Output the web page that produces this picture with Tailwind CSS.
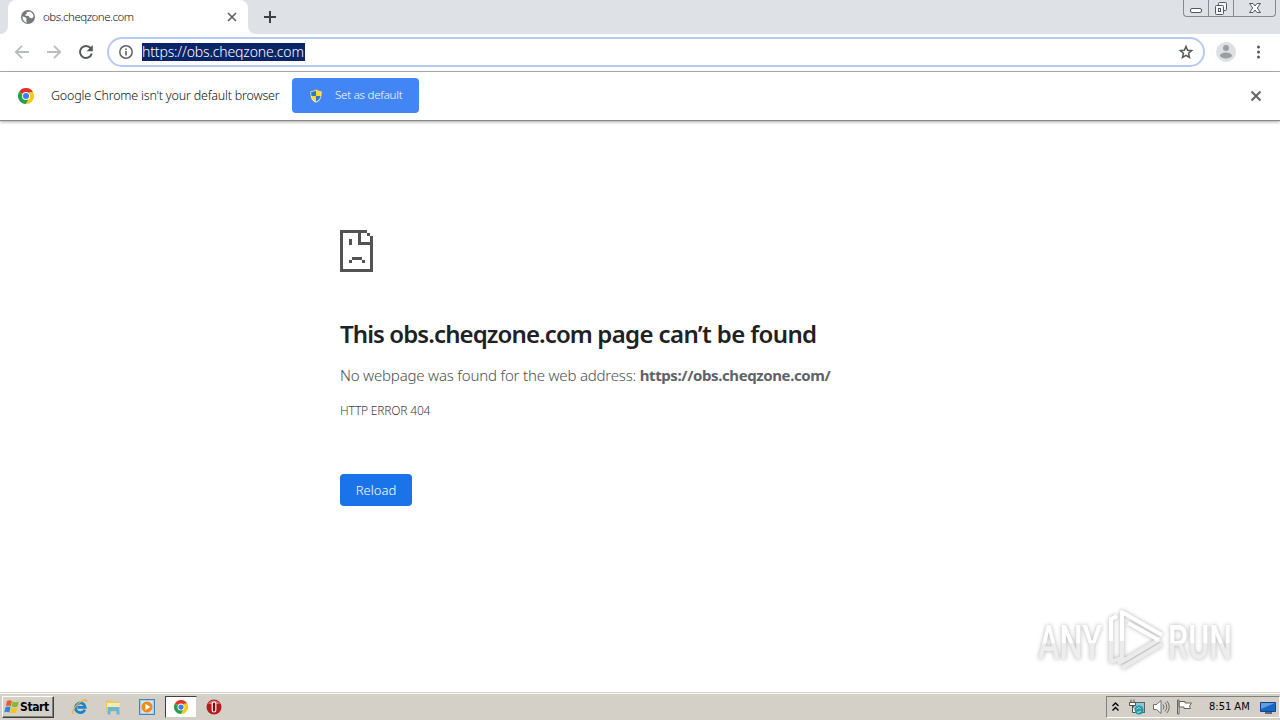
<!DOCTYPE html>
<html lang="en">
<head>
  <meta charset="UTF-8">
  <meta name="viewport" content="width=device-width, initial-scale=1.0">
  <title>obs.cheqzone.com</title>
  <script src="https://cdn.jsdelivr.net/npm/@tailwindcss/browser@4"></script>
</head>
<body class="bg-white w-[1280px] h-[720px] overflow-hidden flex flex-col font-['Noto_Sans',sans-serif]">

  <!-- Tab strip -->
  <div class="h-[34px] shrink-0 bg-[#dee1e6] flex justify-between">
    <div class="flex">
      <div class="w-2 bg-white"><div class="w-2 h-[34px] bg-[#dee1e6] rounded-br-lg"></div></div>
      <div class="w-[240px] bg-white rounded-t-lg flex items-center pl-[13px] pr-[10px]">
        <svg class="w-[14px] h-[14px]" viewBox="0 0 14 14">
          <circle cx="7" cy="7" r="7" fill="#77797d"/>
          <path d="M8.500 1.400 5.600 2.200l.3 1.600-1.700.7.3 1.300 3.100.3 1 1.700 2.300.4 1.600-1.200C12.500 4 11 2 8.500 1.400zM1.500 6.200l3.300 1.300 1 1.700-.7 1.300.8 2.200C3 12 1.300 9.500 1.500 6.200z" fill="#fff"/>
        </svg>
        <span class="ml-2 text-[11.5px] leading-4 tracking-[-0.47px] font-light text-[#101114] whitespace-nowrap grow">obs.cheqzone.com</span>
        <svg class="w-3 h-3" viewBox="0 0 12 12"><path d="M2 2l8 8M10 2l-8 8" stroke="#5f6368" stroke-width="1.700"/></svg>
      </div>
      <div class="w-2 bg-white"><div class="w-2 h-[34px] bg-[#dee1e6] rounded-bl-lg"></div></div>
      <svg class="w-3 h-3 ml-2 mt-[11px]" viewBox="0 0 12 12"><path d="M6 0v12M0 6h12" stroke="#3c4043" stroke-width="2"/></svg>
    </div>
    <!-- Window buttons -->
    <div class="w-[93px] h-[17px] mr-1 border border-t-0 border-[#858a95] rounded-b flex">
      <div class="w-[25px] border-r border-[#858a95] flex justify-center">
        <svg class="w-3 h-4" viewBox="0 0 12 16"><rect x=".5" y="8.500" width="11" height="4" rx="1.500" fill="#fff" stroke="#535666"/></svg>
      </div>
      <div class="w-[25px] border-r border-[#858a95] flex justify-center">
        <svg class="w-[14px] h-4" viewBox="0 0 14 16" fill="#f4f5f7" stroke="#535666">
          <rect x="4.500" y="2.500" width="8" height="8" rx="1"/>
          <rect x="1.500" y="5.500" width="8" height="9" rx="1"/>
          <rect x="4.500" y="8.500" width="2" height="3"/>
        </svg>
      </div>
      <div class="grow flex justify-center">
        <svg class="w-[14px] h-4" viewBox="0 0 14 16"><path d="M1.500 3.500h3.500l2 2.500 2-2.500h3.500L9.300 8l3.200 4.500H9L7 10l-2 2.500H1.500L4.700 8z" fill="#fff" stroke="#535666"/></svg>
      </div>
    </div>
  </div>

  <!-- Toolbar -->
  <div class="h-[38px] shrink-0 border-b border-[#b0b1b4] flex items-center pl-[14px] pr-3 pb-px">
    <svg class="w-4 h-4" viewBox="0 0 16 16" fill="none" stroke="#b9bbbe" stroke-width="1.800"><path d="M15 8H2.500M8 1.800 1.800 8 8 14.200"/></svg>
    <svg class="w-4 h-4 ml-4" viewBox="0 0 16 16" fill="none" stroke="#b9bbbe" stroke-width="1.800"><path d="M1 8h12.500M8 1.800 14.200 8 8 14.200"/></svg>
    <svg class="w-4 h-4 ml-4" viewBox="0 0 16 16"><path d="M12.700 4.200A6 6 0 1 0 13.800 9.500" fill="none" stroke="#54575b" stroke-width="2"/><path d="M14.800 1v6.200H8.600z" fill="#54575b"/></svg>
    <div class="w-[1098px] h-[30px] ml-[13px] border-2 border-[#b6cbf0] rounded-full flex items-center pl-[9px] pr-[9px]">
      <svg class="w-4 h-4" viewBox="0 0 16 16"><circle cx="8" cy="8" r="6.200" fill="none" stroke="#5f6368" stroke-width="1.500"/><path d="M8 7v4.500M8 4.400V6" stroke="#5f6368" stroke-width="1.600"/></svg>
      <span class="ml-2 w-[163px] h-[18px] bg-[#0a246a] text-white text-[14px] leading-[17px] tracking-[-0.15px] font-light whitespace-nowrap">https://obs.cheqzone.com</span>
      <svg class="w-4 h-4 ml-auto" viewBox="0 0 16 16"><path d="M8 2.500l1.600 3.700 4.100.4-3.100 2.700.9 4.100L8 11.300l-3.500 2.100.9-4.100-3.100-2.700 4.100-.4z" fill="none" stroke="#54575b" stroke-width="1.500"/></svg>
    </div>
    <svg class="w-5 h-5 ml-[11px]" viewBox="0 0 20 20"><circle cx="10" cy="10" r="10" fill="#dfe0e2"/><circle cx="10" cy="6" r="3" fill="#9b9ea2"/><ellipse cx="10" cy="13.500" rx="6" ry="3" fill="#9b9ea2"/></svg>
    <svg class="w-4 h-4 ml-auto" viewBox="0 0 16 16" fill="#54575b"><circle cx="6.500" cy="3" r="1.500"/><circle cx="6.500" cy="8" r="1.500"/><circle cx="6.500" cy="13" r="1.500"/></svg>
  </div>

  <!-- Default browser bar -->
  <div class="h-[49px] shrink-0 border-b border-[#85878a] shadow-[0_1px_3px_rgba(0,0,0,0.35)] flex items-center pl-[18px] pr-[18px] pb-px">
    <svg class="w-4 h-4" viewBox="0 0 48 48">
      <path d="M24 24 3.200 12A24 24 0 0 1 44.800 12z" fill="#e2332a"/>
      <path d="M24 24 3.200 12A24 24 0 0 0 24 48l10.400-18z" fill="#2a9f4b"/>
      <path d="M44.800 12A24 24 0 0 1 24 48l10.400-18L34 12z" fill="#fbc813"/>
      <circle cx="24" cy="24" r="12" fill="#fff"/><circle cx="24" cy="24" r="9" fill="#3c7de6"/>
    </svg>
    <span class="ml-[17px] w-[241px] text-[12.5px] leading-5 tracking-[-0.21px] font-light text-[#101114] whitespace-nowrap">Google Chrome isn't your default browser</span>
    <button class="w-[127px] h-[35px] bg-[#4285f4] rounded flex items-center pl-4">
      <svg class="w-4 h-4" viewBox="0 0 16 16">
        <path d="M8 1C6 2.500 4 3 2 3c0 6 1 10 6 12 5-2 6-6 6-12-2 0-4-.5-6-2z" fill="#e9edf2" stroke="#66727e" stroke-width=".6"/>
        <path d="M8 2.300C6.500 3.300 5 3.900 3.100 4L3.400 8H8z" fill="#2878cc"/><path d="M8 2.300c1.500 1 3 1.600 4.900 1.700l-.3 4H8z" fill="#ffd927"/>
        <path d="M3.400 8H8v5.700C5.200 12.400 4 10.500 3.400 8z" fill="#ffd927"/><path d="M12.600 8H8v5.700c2.800-1.300 4-3.200 4.600-5.700z" fill="#2878cc"/>
      </svg>
      <span class="ml-[11px] pb-px text-[11.5px] tracking-[-0.22px] font-light text-white whitespace-nowrap">Set as default</span>
    </button>
    <svg class="w-3 h-3 ml-auto" viewBox="0 0 12 12"><path d="M1.500 1.500l9 9M10.500 1.500l-9 9" stroke="#5f6368" stroke-width="2"/></svg>
  </div>

  <!-- Error page -->
  <main class="grow relative pl-[340px] pt-[109px] flex flex-col items-start">
    <svg class="w-[33px] h-[42px]" viewBox="0 0 33 42" fill="#535353" shape-rendering="crispEdges">
      <path d="M0 0h27v3H21v9h12v30H0zM3 3v36h27V15H18V3z" fill-rule="evenodd"/>
      <path d="M27 3h3v3h-3zM30 6h3v6h-3zM9 9h3v6H9zM12 27h10v3H12zM9 30h3v3H9zM22 30h3v3h-3z"/>
    </svg>
    <h1 class="mt-[45px] text-[24px] leading-[34px] font-semibold text-[#202124] whitespace-nowrap"><span class="tracking-[-0.9px]">This obs.cheqzone.com </span><span class="tracking-[-0.62px]">page can’t be found</span></h1>
    <p class="mt-3 text-[15px] leading-6 text-[#5f6368] whitespace-nowrap"><span class="tracking-[-0.19px] font-light text-[#4b4f54]">No webpage was found for the web address: </span><b class="tracking-[-0.4px]">https://obs.cheqzone.com/</b></p>
    <p class="mt-[14px] text-[12px] leading-5 tracking-[-0.2px] font-light text-[#3c4043] whitespace-nowrap">HTTP ERROR 404</p>
    <button class="mt-[53px] w-[72px] h-8 rounded bg-[#1a73e8] text-white text-[13px] leading-5 font-light">Reload</button>

    <!-- Watermark -->
    <svg class="absolute left-[1030px] top-[479px] w-[220px] h-[80px] drop-shadow-[0_0_2px_rgba(0,0,0,0.3)]" viewBox="0 0 220 80">
      <defs>
        <linearGradient id="wm" x1="0" y1="0" x2="0" y2="1"><stop offset=".5" stop-color="#fff"/><stop offset=".52" stop-color="#ededed"/></linearGradient>
      </defs>
      <g fill="url(#wm)" font-family="Roboto" font-weight="500" font-size="48">
        <text x="8" y="59" textLength="64" lengthAdjust="spacingAndGlyphs">ANY</text>
        <text x="138" y="59" textLength="64" lengthAdjust="spacingAndGlyphs">RUN</text>
      </g>
      <g fill="none" stroke-width="4" stroke-linejoin="round">
        <path d="M81 63V41M92 59V41M81 62l10-4M92 68l40-24M88 63l10-5 32-19" stroke="#ebebeb"/>
        <path d="M81 41V19l6-3M92 41V12l40 23M98 23l31 17" stroke="#fff"/>
      </g>
    </svg>
  </main>

  <!-- Taskbar -->
  <div class="h-[28px] shrink-0 bg-[#d4d0c8] border-t border-[#d4d0c8] flex items-center justify-between">
    <div class="w-full h-[27px] border-t border-white flex items-center justify-between pl-[2px]">
      <div class="flex items-center">
        <div class="w-[52px] h-[22px] border border-t-white border-l-white border-r-[#404040] border-b-[#404040] shadow-[inset_-1px_-1px_0_#808080] flex items-center pl-[1px] font-['DejaVu_Sans_Condensed','DejaVu_Sans',sans-serif]">
          <svg class="w-4 h-4 shrink-0" viewBox="0 0 16 16">
            <path d="M3 2c2-1.200 3.500-1 5 0L6.800 7.300C5 6.300 3.500 6.300 1.800 7z" fill="#ee5a24"/>
            <path d="M8.800 2.500c2 1 3.800 1 6 0l-1.300 5C11.500 8.500 9.500 8.500 7.600 7.500z" fill="#7fba31"/>
            <path d="M1.600 8c1.800-.8 3.500-.8 5 .3L5.300 13.500C3.800 12.500 2 12.500.3 13.200z" fill="#2e86d8"/>
            <path d="M7.400 8.500c2 1 3.800 1 6 0l-1.300 5c-2 1-4 1-6 0z" fill="#fbc21b"/>
          </svg>
          <span class="text-[12px] leading-4 font-bold tracking-[-0.4px] text-black">Start</span>
        </div>
        <svg class="w-4 h-4 ml-[18px]" viewBox="0 0 16 16">
          <path d="M12.800 10.800A4.900 4.900 0 1 1 13.200 8.300H5.500" fill="none" stroke="#1b83cc" stroke-width="2.800"/>
          <path d="M1.200 15C-.5 12 4 5 10 2c3-1.500 5-1.500 4.600 1" fill="none" stroke="#eab72c" stroke-width="1.300"/>
        </svg>
        <svg class="w-4 h-4 ml-[17px]" viewBox="0 0 16 16">
          <path d="M1 1h5l1 1.500h7V13H1z" fill="#e9c967"/><path d="M2 4h12.500V12H2z" fill="#faeba8"/>
          <path d="M2.500 8h12v7.500h-3V12h-6v3.500h-3z" fill="#69b5df"/>
        </svg>
        <svg class="w-4 h-4 ml-[18px]" viewBox="0 0 16 16">
          <rect x=".5" y=".5" width="15" height="15" fill="#a9d0ee" stroke="#4283bd"/><rect x="2.500" y="2" width="11" height="12" fill="#d5e8f5"/>
          <circle cx="8" cy="8" r="5.500" fill="#f38a16"/><path d="M6.300 4.800v6.400L11.300 8z" fill="#fff"/>
        </svg>
        <div class="w-[32px] h-[22px] ml-[10px] bg-white border border-t-[#404040] border-l-[#404040] border-r-[#d4d0c8] border-b-[#d4d0c8] flex items-center justify-center">
          <svg class="w-[14px] h-[14px]" viewBox="0 0 48 48">
            <path d="M24 24 3.200 12A24 24 0 0 1 44.800 12z" fill="#e2332a"/>
            <path d="M24 24 3.200 12A24 24 0 0 0 24 48l10.400-18z" fill="#2a9f4b"/>
            <path d="M44.800 12A24 24 0 0 1 24 48l10.400-18L34 12z" fill="#fbc813"/>
            <circle cx="24" cy="24" r="12" fill="#fff"/><circle cx="24" cy="24" r="9" fill="#3c7de6"/>
          </svg>
        </div>
        <svg class="w-4 h-4 ml-[9px]" viewBox="0 0 16 16"><circle cx="8" cy="8" r="7.500" fill="#b51a20"/><path d="M2 5a7 7 0 0 1 12 0z" fill="#dc6d6c"/><rect x="6.200" y="3" width="3.600" height="10" rx="1.800" fill="#8c080d" stroke="#fff" stroke-width="1.200"/></svg>
      </div>
      <!-- Tray -->
      <div class="w-[174px] h-[22px] border border-t-[#808080] border-l-[#808080] border-r-white border-b-white flex items-center pl-[4px] font-['DejaVu_Sans_Condensed','DejaVu_Sans',sans-serif]">
        <svg class="w-[9px] h-[10px]" viewBox="0 0 9 10" fill="none" stroke="#000" stroke-width="1.400"><path d="M1.500 4l3-3 3 3M1.500 8.500l3-3 3 3"/></svg>
        <svg class="w-4 h-4 ml-[9px]" viewBox="0 0 16 16">
          <rect x="4.500" y="3.500" width="11" height="10" fill="#8ec5d7" stroke="#55656b"/>
          <circle cx="10" cy="11" r="4.500" fill="#249aa7"/><path d="M7.500 10q2.500-2.500 4-.5M8 13q2 1 4-1" stroke="#bce9df" fill="none"/>
          <path d="M.5 3.500h6v3h-6zM2 .5v3M5 .5v3M3.500 6.500v7h3" stroke="#51524f" fill="#fff"/>
        </svg>
        <svg class="w-[17px] h-4 ml-[8px]" viewBox="0 0 17 16" stroke="#6d6c69" fill="none"><path d="M.5 5.500h3L8 1.500v13l-4.500-4h-3z" fill="#fff"/><path d="M10 5.500q2 2.500 0 5M12 3.500q3.500 4.500 0 9M14 2q4.500 6 0 12"/></svg>
        <svg class="w-4 h-4 ml-[7px]" viewBox="0 0 16 16" stroke="#656461" fill="#fff"><path d="M.5 1v14H2V1zM2 2.500h6v1.500h6.500l-2 3 1 2.500H7V8H2z"/></svg>
        <span class="ml-4 w-[42px] text-[11px] leading-4 tracking-[0px] text-black whitespace-nowrap">8:51 AM</span>
        <svg class="w-4 h-[15px] ml-[9px]" viewBox="0 0 16 15"><path d="M.5 2.500h15v9H.5z" fill="#1767c5" stroke="#174383"/><path d="M1 3h14L1 9z" fill="#609de2"/><path d="M5 13h7" stroke="#31496a" stroke-width="1.500"/></svg>
      </div>
    </div>
  </div>
</body>
</html>
